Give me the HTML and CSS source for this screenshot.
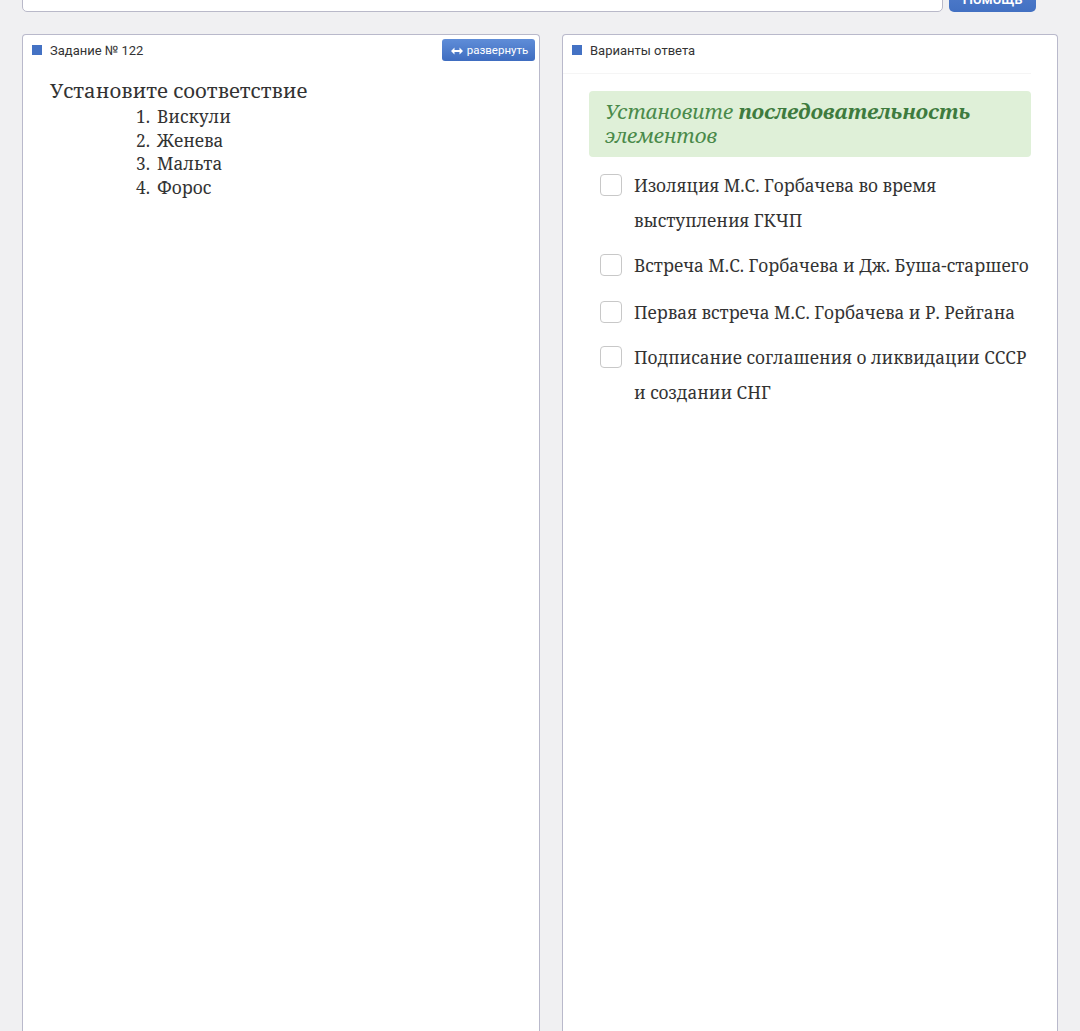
FILE: index.html
```html
<!DOCTYPE html>
<html lang="ru">
<head>
    <meta charset="UTF-8">
    <meta name="viewport" content="width=device-width, initial-scale=1.0">
    <title>Задание № 122</title>
    <link rel="stylesheet" href="styles.css">
</head>
<body>
    <div class="page">
        <!-- поиск -->
        <div class="search-row">
            <div class="search-box"><span class="search-text">Введите вопрос или часть текста</span></div>
            <button class="help-btn">Помощь</button>
        </div>
        <div class="columns">
            <!-- задание -->
            <section class="panel task-panel">
                <div class="panel-head">
                    <span class="marker"></span>
                    <span class="panel-title">Задание № 122</span>
                    <button class="expand-btn">
                        <svg class="arrows" width="12" height="8" viewBox="0 0 12 8"><path d="M0 4 L3.5 0.5 V3 H8.5 V0.5 L12 4 L8.5 7.5 V5 H3.5 V7.5 Z" fill="#fff"/></svg>
                        развернуть
                    </button>
                </div>
                <div class="task-body">
                    <p class="task-title">Установите соответствие</p>
                    <ol class="task-list">
                        <li>Вискули</li>
                        <li>Женева</li>
                        <li>Мальта</li>
                        <li>Форос</li>
                    </ol>
                </div>
            </section>
            <!-- варианты -->
            <section class="panel answer-panel">
                <div class="panel-head head-line">
                    <span class="marker"></span>
                    <span class="panel-title">Варианты ответа</span>
                </div>
                <div class="answer-body">
                    <div class="hint">Установите <b>последовательность</b> элементов</div>
                    <ul class="options">
                        <li><span class="check"></span><span class="opt-text">Изоляция М.С. Горбачева во время выступления ГКЧП</span></li>
                        <li><span class="check"></span><span class="opt-text">Встреча М.С. Горбачева и Дж. Буша-старшего</span></li>
                        <li class="wide"><span class="check"></span><span class="opt-text">Первая встреча М.С. Горбачева и Р. Рейгана</span></li>
                        <li><span class="check"></span><span class="opt-text">Подписание соглашения о ликвидации СССР и создании СНГ</span></li>
                    </ul>
                </div>
            </section>
        </div>
    </div>
</body>
</html>
```
FILE: styles.css
```css
html, body{
    margin: 0;
    height: 100%;
    overflow: hidden;
}
body{
    background-color: #f0f0f2;
    font-family: Roboto, "Liberation Sans", Arial, sans-serif;
    color: #333;
}
.page{
    padding: 0 22px;
}
.search-row{
    display: flex;
    gap: 6px;
    margin-top: -25px;
    height: 37px;
    width: 1014px;
}
.search-box{
    flex: 1;
    background-color: #fff;
    border: 1px solid #b9b9c9;
    border-radius: 5px;
    box-sizing: border-box;
    padding-left: 178px;
    font-size: 15px;
    line-height: 32px;
    color: #555;
    overflow: hidden;
}
.help-btn{
    width: 87px;
    border: none;
    border-radius: 5px;
    background: linear-gradient(#5a86d2, #4270c2);
    color: #fff;
    font-family: Roboto, "Liberation Sans", sans-serif;
    font-size: 15px;
    font-weight: 500;
    padding-bottom: 4px;
    display: flex;
    align-items: flex-end;
    justify-content: center;
}
.columns{
    display: flex;
    gap: 22px;
    margin-top: 22px;
}
.panel{
    background-color: #fff;
    border: 1px solid #b9b9cb;
    border-bottom: none;
    border-radius: 4px 4px 0 0;
    height: 1040px;
    box-sizing: border-box;
}
.task-panel{
    width: 518px;
}
.answer-panel{
    width: 496px;
}
.panel-head{
    display: flex;
    align-items: center;
    height: 28px;
    padding: 1px 4px 0 9px;
}
.marker{
    width: 10px;
    height: 10px;
    background-color: #4472c4;
    margin-right: 8px;
    flex-shrink: 0;
}
.panel-title{
    font-size: 13px;
    color: #333;
    flex: 1;
}
.expand-btn{
    width: 93px;
    height: 22px;
    border: none;
    border-radius: 3px;
    background: linear-gradient(#5f8dd8, #3f6dc0);
    color: #fff;
    font-family: Roboto, "Liberation Sans", sans-serif;
    font-size: 11.5px;
    padding: 0 0 0 2px;
    display: flex;
    align-items: center;
    justify-content: center;
    gap: 4px;
}
.arrows{
    margin-top: 1px;
}
.task-body{
    padding: 11px 27px;
    font-family: "Noto Serif", "DejaVu Serif", serif;
    color: #333;
}
.task-title{
    margin: 0;
    font-size: 20.4px;
    line-height: 30px;
}
.task-list{
    margin: 0;
    padding-left: 107px;
    list-style: none;
    counter-reset: num;
    font-size: 17.3px;
    line-height: 23.5px;
}
.task-list li{
    counter-increment: num;
}
.task-list li::before{
    content: counter(num) ".";
    display: inline-block;
    width: 21px;
    margin-left: -21px;
}
.head-line{
    border-bottom: 1px solid #f5f5f5;
    padding-bottom: 9px;
    margin: 0 26px 0 0;
}
.answer-body{
    padding: 17px 26px 0 26px;
    font-family: "Noto Serif", "DejaVu Serif", serif;
}
.hint{
    background-color: #dff0d8;
    border-radius: 4px;
    padding: 8px 16px 10px 16px;
    font-style: italic;
    font-size: 20.6px;
    line-height: 24px;
    color: #4a8a4a;
}
.hint b{
    color: #3e7b3e;
}
.options{
    list-style: none;
    margin: 0;
    padding: 11px 0 0 11px;
}
.options li{
    display: flex;
    margin-bottom: 10px;
}
.options li.wide{
    margin-top: 12px;
    margin-bottom: 10px;
}
.check{
    width: 20px;
    height: 20px;
    border: 1px solid #c8c8c8;
    border-radius: 4px;
    flex-shrink: 0;
    margin: 6px 12px 0 0;
}
.opt-text{
    font-size: 17.25px;
    line-height: 35px;
    color: #333;
}
```
